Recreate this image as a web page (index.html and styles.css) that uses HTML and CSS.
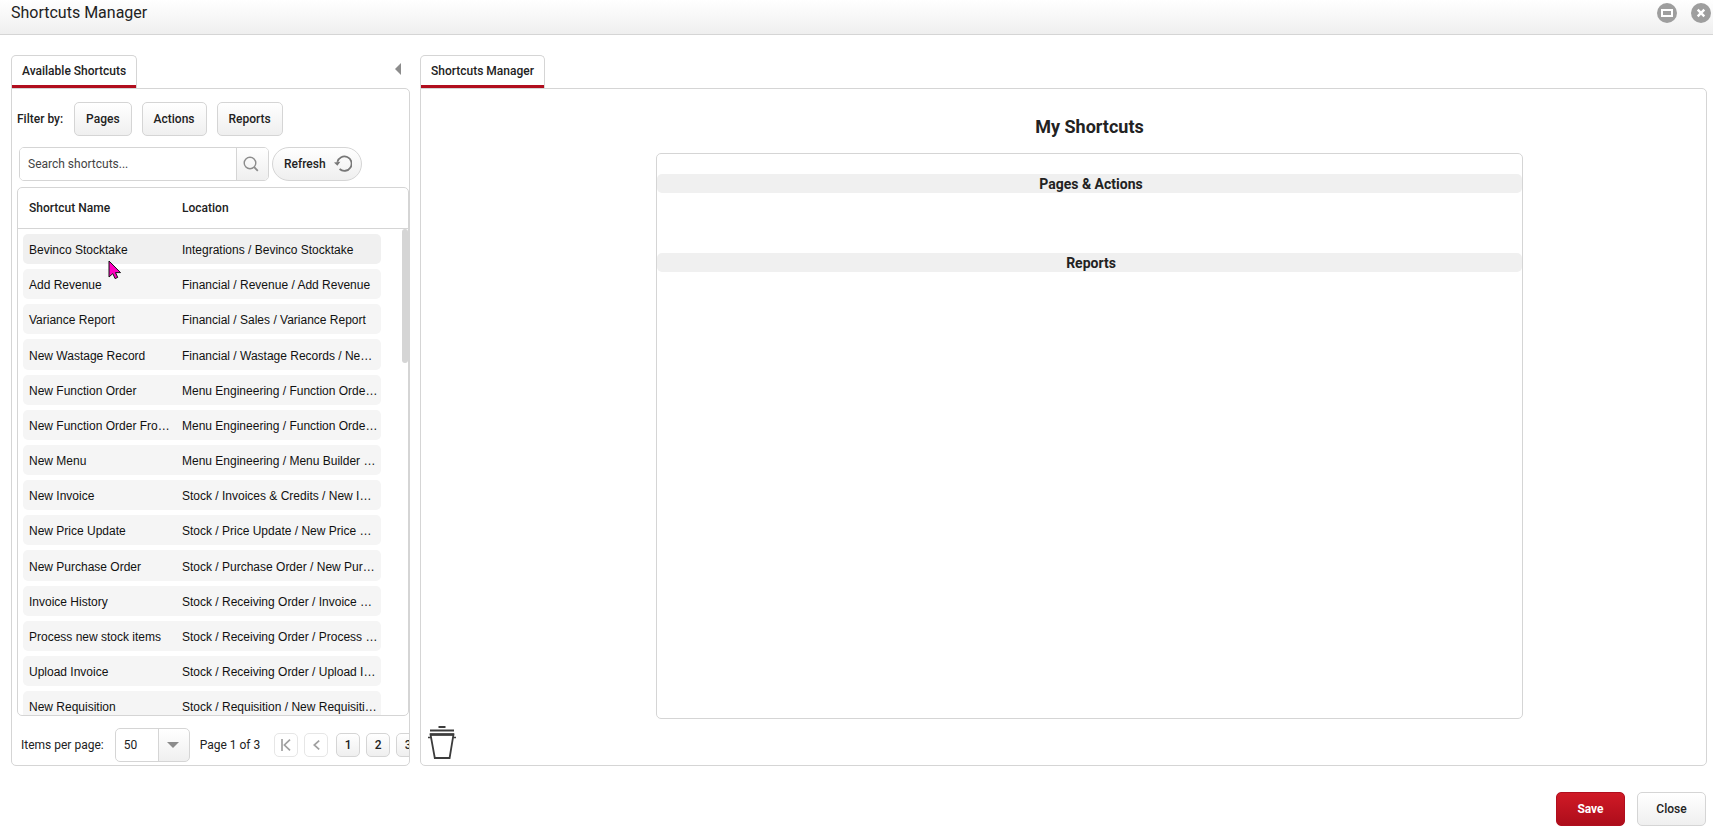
FILE: index.html
```html
<!DOCTYPE html>
<html lang="en">
<head>
    <meta charset="UTF-8">
    <meta name="viewport" content="width=device-width, initial-scale=1.0">
    <title>Shortcuts Manager</title>
    <link rel="stylesheet" href="styles.css">
</head>
<body>

<header class="window-header">
    <h1>Shortcuts Manager</h1>
    <div class="window-actions">
        <button class="round-btn" type="button" aria-label="Maximize">
            <svg width="20" height="20" viewBox="0 0 20 20"><circle cx="10" cy="10" r="10" fill="#9e9e9e"/><rect x="5" y="7" width="10" height="6" fill="none" stroke="#fff" stroke-width="2"/></svg>
        </button>
        <button class="round-btn" type="button" aria-label="Close window">
            <svg width="20" height="20" viewBox="0 0 20 20"><circle cx="10" cy="10" r="10" fill="#9e9e9e"/><path d="M6.7 6.7l6.6 6.6M13.3 6.7l-6.6 6.6" stroke="#fff" stroke-width="2.4"/></svg>
        </button>
    </div>
</header>

<main class="panes">
    <section class="pane pane-left">
        <div class="tab-bar">
            <a class="tab" href="#available">Available Shortcuts</a>
            <button class="collapse-btn" type="button" aria-label="Collapse">
                <svg width="6" height="12" viewBox="0 0 6 12"><path d="M6 0v12L0 6z" fill="#8c8c8c"/></svg>
            </button>
        </div>
        <div class="pane-body" id="available">
            <div class="filter-row">
                <span class="filter-label">Filter by:</span>
                <button class="btn" type="button">Pages</button>
                <button class="btn" type="button">Actions</button>
                <button class="btn" type="button">Reports</button>
            </div>

            <div class="search-row">
                <div class="search-box">
                    <input type="text" aria-label="Search shortcuts" placeholder="Search shortcuts...">
                    <button type="button" aria-label="Search">
                        <svg width="16" height="16" viewBox="0 0 16 16" fill="none" stroke="#8c8c8c" stroke-width="1.4"><circle cx="7" cy="7" r="5.8"/><path d="M11.2 11.2l3.6 3.6" stroke-width="1.8"/></svg>
                    </button>
                </div>
                <button class="btn btn-round" type="button">Refresh
                    <svg width="18" height="18" viewBox="0 0 18 18"><path d="M3.4 6.9A7.2 7.2 0 1 1 5.6 14" fill="none" stroke="#777" stroke-width="1.8"/><path d="M0 7.6l6.4-.8-3 4z" fill="#777"/></svg>
                </button>
            </div>

            <div class="grid">
                <table class="grid-table">
                    <thead>
                        <tr><th>Shortcut Name</th><th>Location</th></tr>
                    </thead>
                    <tbody>
                        <tr class="hover"><td>Bevinco Stocktake</td><td>Integrations / Bevinco Stocktake</td></tr>
                        <tr><td>Add Revenue</td><td>Financial / Revenue / Add Revenue</td></tr>
                        <tr><td>Variance Report</td><td>Financial / Sales / Variance Report</td></tr>
                        <tr><td>New Wastage Record</td><td>Financial / Wastage Records / New Wastage Record</td></tr>
                        <tr><td>New Function Order</td><td>Menu Engineering / Function Orders / New Function Order</td></tr>
                        <tr><td>New Function Order From Template</td><td>Menu Engineering / Function Orders / New Function Order</td></tr>
                        <tr><td>New Menu</td><td>Menu Engineering / Menu Builder / New Menu</td></tr>
                        <tr><td>New Invoice</td><td>Stock / Invoices &amp; Credits / New Invoice</td></tr>
                        <tr><td>New Price Update</td><td>Stock / Price Update / New Price Update</td></tr>
                        <tr><td>New Purchase Order</td><td>Stock / Purchase Order / New Purchase Order</td></tr>
                        <tr><td>Invoice History</td><td>Stock / Receiving Order / Invoice History</td></tr>
                        <tr><td>Process new stock items</td><td>Stock / Receiving Order / Process new stock items</td></tr>
                        <tr><td>Upload Invoice</td><td>Stock / Receiving Order / Upload Invoice</td></tr>
                        <tr><td>New Requisition</td><td>Stock / Requisition / New Requisition</td></tr>
                    </tbody>
                </table>
                <div class="scroll-thumb"></div>
                <svg class="pointer" width="14" height="20" viewBox="0 0 14 20"><path d="M1 1v16l3.8-3.4 2.3 5 2.6-1.2-2.2-4.8h5z" fill="#ff00c0" stroke="#111" stroke-width="1"/></svg>
            </div>

            <div class="pager">
                <label for="pageSize">Items per page:</label>
                <div class="select-wrap">
                    <select id="pageSize">
                        <option>50</option>
                        <option>100</option>
                    </select>
                    <svg width="12" height="6" viewBox="0 0 12 6"><path d="M0 0h12L6 6z" fill="#8c8c8c"/></svg>
                </div>
                <span class="page-info">Page 1 of 3</span>
                <div class="page-buttons">
                    <button type="button" disabled aria-label="First page">
                        <svg width="10" height="12" viewBox="0 0 10 12" fill="none" stroke="#a0a0a0" stroke-width="1.7"><path d="M1 0v12M9 .6L3.4 6 9 11.4"/></svg>
                    </button>
                    <button type="button" disabled aria-label="Previous page">
                        <svg width="7" height="10" viewBox="0 0 7 10" fill="none" stroke="#a0a0a0" stroke-width="1.7"><path d="M6.2.6L1.2 5l5 4.4"/></svg>
                    </button>
                    <button class="page-number" type="button">1</button>
                    <button type="button">2</button>
                    <button type="button">3</button>
                </div>
            </div>
        </div>
    </section>

    <section class="pane pane-right">
        <div class="tab-bar">
            <a class="tab" href="#manager">Shortcuts Manager</a>
        </div>
        <div class="pane-body manager" id="manager">
            <div class="trash">
                <svg width="28" height="34" viewBox="0 0 28 34" fill="none" stroke="#3c3c3c"><path d="M10.5 1h7" stroke-width="2"/><path d="M2 4.5h24" stroke-width="2"/><path d="M2.5 8.5h23L21.6 32H6.8z" stroke-width="1.8"/><path d="M2 8.5h24" stroke-width="2.4"/><path d="M0 11.5h3M25 11.5h3" stroke-width="1.6"/></svg>
            </div>
            <div class="shortcuts">
                <h2>My Shortcuts</h2>
                <div class="shortcut-box">
                    <h3>Pages &amp; Actions</h3>
                    <h3>Reports</h3>
                </div>
            </div>
        </div>
    </section>
</main>

<footer class="window-footer">
    <button class="btn btn-primary" type="button">Save</button>
    <button class="btn btn-close" type="button">Close</button>
</footer>

</body>
</html>
```

FILE: styles.css
```css
* {
    box-sizing: border-box;
}

body {
    margin: 0;
    height: 100vh;
    display: flex;
    flex-direction: column;
    font-family: Roboto, "Liberation Sans", sans-serif;
    font-size: 12px;
    color: #222;
    background: #fff;
}

h1, h2, h3 {
    margin: 0;
}

button, input, select {
    font-family: inherit;
    font-size: 12px;
    color: #222;
    margin: 0;
}

svg {
    display: block;
    flex: none;
}

/* Header */
.window-header {
    display: flex;
    justify-content: space-between;
    align-items: center;
    height: 35px;
    padding: 0 2px 9px 11px;
    border-bottom: 1px solid #d5d5d5;
    background: linear-gradient(#fff, #efefef);
}

.window-header h1 {
    font-size: 16px;
    font-weight: 400;
}

.window-actions {
    display: flex;
    gap: 14px;
}

.round-btn, .collapse-btn {
    padding: 0;
    border: none;
    background: none;
}

/* Panes */
.panes {
    flex: 1;
    min-height: 0;
    display: flex;
    gap: 10px;
    padding: 20px 6px 0 11px;
}

.pane {
    display: flex;
    flex-direction: column;
    min-width: 0;
}

.pane-left {
    flex: 0 0 399px;
}

.pane-right {
    flex: 1;
}

.tab-bar {
    display: flex;
    justify-content: space-between;
    height: 33px;
    padding-right: 9px;
}

.tab {
    padding: 0 10px;
    border: 1px solid #d5d5d5;
    border-bottom: none;
    border-radius: 5px 5px 0 0;
    box-shadow: inset 0 -3px #b10e1e;
    line-height: 31px;
    font-weight: 500;
    color: #222;
    text-decoration: none;
}

.collapse-btn {
    height: 28px;
}

.pane-body {
    flex: 1;
    min-height: 0;
    display: flex;
    flex-direction: column;
    border: 1px solid #d5d5d5;
    border-radius: 0 5px 5px 5px;
    overflow: hidden;
}

/* Buttons */
.btn {
    height: 34px;
    padding: 0 11px;
    border: 1px solid #d5d5d5;
    border-radius: 5px;
    background: linear-gradient(#fff, #efefef);
    font-weight: 500;
}

.btn-round {
    display: flex;
    align-items: center;
    gap: 8px;
    padding: 0 9px 0 11px;
    border-radius: 17px;
}

.btn-primary {
    width: 69px;
    border-color: #b10e1e;
    background: linear-gradient(#d01a26, #ad0d1b);
    color: #fff;
    font-weight: 700;
}

.btn-close {
    width: 69px;
}

/* Filter and search */
.filter-row {
    display: flex;
    align-items: center;
    gap: 10px;
    padding: 13px 5px 11px;
}

.filter-label {
    margin-right: 1px;
    font-weight: 500;
}

.search-row {
    display: flex;
    gap: 3px;
    padding: 0 7px 6px;
}

.search-box {
    display: flex;
    width: 250px;
    height: 34px;
    border: 1px solid #d5d5d5;
    border-radius: 5px;
    overflow: hidden;
}

.search-box input {
    flex: 1;
    min-width: 0;
    padding: 0 8px;
    border: none;
    outline: none;
}

.search-box input::placeholder {
    color: #444;
}

.search-box button {
    display: flex;
    align-items: center;
    justify-content: center;
    width: 32px;
    padding: 0 3px 0 0;
    border: none;
    border-left: 1px solid #d5d5d5;
    background: linear-gradient(#fff, #efefef);
}

/* Grid */
.grid {
    position: relative;
    flex: 1;
    min-height: 0;
    margin-left: 5px;
    border: 1px solid #d5d5d5;
    border-radius: 5px;
    overflow: hidden;
}

.grid-table, .grid-table thead, .grid-table tbody {
    display: block;
}

.grid-table tr {
    display: flex;
    align-items: center;
}

.grid-table thead {
    padding: 0 27px 0 5px;
    border-bottom: 1px solid #d5d5d5;
}

.grid-table thead tr {
    height: 40px;
}

.grid-table tbody {
    padding: 5px 27px 0 5px;
    font-family: "Liberation Sans", Arial, sans-serif;
    color: #111;
}

.grid-table tbody tr {
    height: 30px;
    margin-bottom: 5px;
    border-radius: 5px;
    background: #f5f5f5;
}

.grid-table tbody tr:nth-child(6n+4) {
    height: 31px;
}

.grid-table tbody tr.hover {
    background: #f0f0f0;
}

.grid-table th, .grid-table td {
    flex: 1;
    min-width: 0;
    padding: 0 3px 0 6px;
    line-height: 16px;
    text-align: left;
    white-space: nowrap;
    overflow: hidden;
    text-overflow: ellipsis;
}

.grid-table td {
    padding-top: 2px;
}

.grid-table th {
    font-weight: 500;
}

.grid-table th:first-child, .grid-table td:first-child {
    flex: 0 0 153px;
}

.scroll-thumb {
    position: absolute;
    top: 41px;
    right: 0;
    width: 6px;
    height: 134px;
    border-radius: 3px;
    background: #d5d5d5;
}

.pointer {
    position: absolute;
    top: 72px;
    left: 90px;
}

/* Pager */
.pager {
    display: flex;
    align-items: center;
    height: 49px;
    padding: 9px 0 0 9px;
    white-space: nowrap;
}

.pager label {
    margin-right: 11px;
}

.select-wrap {
    position: relative;
    margin-right: 10px;
}

.select-wrap select {
    width: 75px;
    height: 34px;
    padding: 0 8px;
    border: 1px solid #d5d5d5;
    border-radius: 5px;
    appearance: none;
    background: linear-gradient(#d5d5d5, #d5d5d5) 42px 0 / 1px 100% no-repeat, linear-gradient(#fff, #efefef) 43px 0 / 31px 100% no-repeat, #fff;
}

.select-wrap svg {
    position: absolute;
    top: 14px;
    right: 11px;
    pointer-events: none;
}

.page-info {
    margin-right: 14px;
}

.page-buttons {
    display: flex;
    gap: 6px;
}

.page-buttons button {
    flex: none;
    display: flex;
    align-items: center;
    justify-content: center;
    width: 24px;
    height: 24px;
    padding: 0;
    border: 1px solid #d5d5d5;
    border-radius: 5px;
    background: linear-gradient(#fff, #efefef);
    font-weight: 500;
}

.page-buttons button:disabled {
    border-color: #e6e6e6;
    background: #fff;
}

.page-buttons .page-number {
    margin-left: 2px;
}

/* My Shortcuts */
.manager {
    flex-direction: row;
}

.trash {
    display: flex;
    align-items: flex-end;
    width: 52px;
    padding: 0 0 5px 7px;
}

.shortcuts {
    flex: 1;
    display: flex;
    flex-direction: column;
    padding: 26px 183px 46px;
}

.shortcuts h2 {
    margin-bottom: 14px;
    font-size: 18px;
    line-height: 24px;
    font-weight: 700;
    text-align: center;
}

.shortcut-box {
    flex: 1;
    padding-top: 20px;
    border: 1px solid #d5d5d5;
    border-radius: 5px;
}

.shortcut-box h3 {
    margin-bottom: 60px;
    padding: 1px 0 0 3px;
    border-radius: 5px;
    background: #f0f0f0;
    font-size: 14px;
    line-height: 18px;
    font-weight: 700;
    text-align: center;
}

/* Footer */
.window-footer {
    display: flex;
    justify-content: flex-end;
    gap: 12px;
    padding: 26px 7px 11px;
}
```
